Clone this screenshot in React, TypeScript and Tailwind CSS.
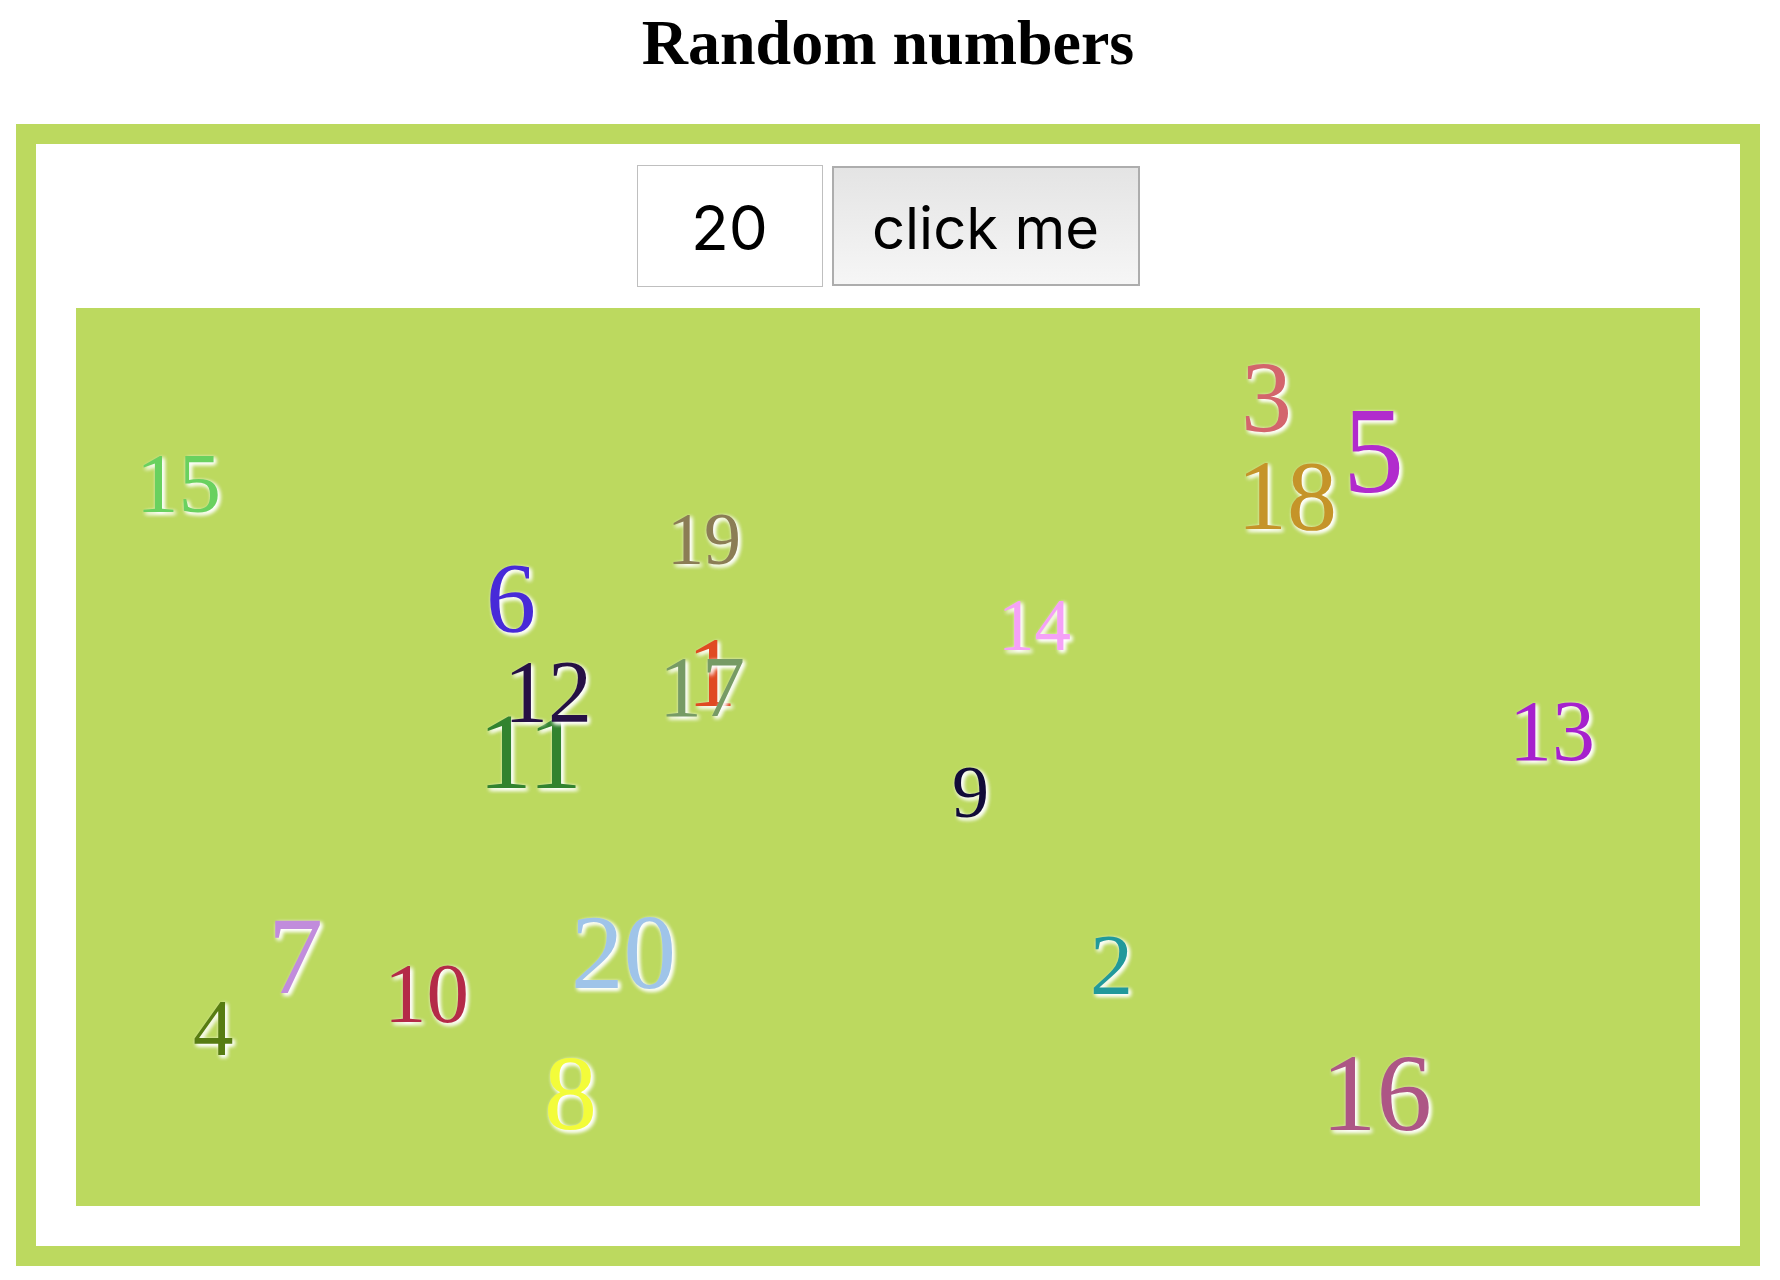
import { useState } from 'react';

type Mark = { value: number; x: number; baseline: number; size: number; color: string };

// x is the left edge and baseline the text baseline, both measured from the board's corner
const marks: Mark[] = [
  { value: 1, x: 611, baseline: 398, size: 99, color: '#e04a22' },
  { value: 2, x: 1014, baseline: 686, size: 86, color: '#21999b' },
  { value: 3, x: 1165, baseline: 124, size: 102, color: '#d3656c' },
  { value: 4, x: 117, baseline: 748, size: 81, color: '#577c12' },
  { value: 5, x: 1267, baseline: 184, size: 122, color: '#b12bcd' },
  { value: 6, x: 410, baseline: 324, size: 100, color: '#482ad8' },
  { value: 7, x: 192, baseline: 685, size: 110, color: '#c18cdc' },
  { value: 8, x: 468, baseline: 822, size: 106, color: '#f3fc3a' },
  { value: 9, x: 876, baseline: 509, size: 74, color: '#110a38' },
  { value: 10, x: 308, baseline: 714, size: 85, color: '#b42a48' },
  { value: 11, x: 402, baseline: 480, size: 108, color: '#32832f' },
  { value: 12, x: 428, baseline: 414, size: 88, color: '#261045' },
  { value: 13, x: 1433, baseline: 452, size: 86, color: '#a621cd' },
  { value: 14, x: 922, baseline: 342, size: 73, color: '#f5a1f7' },
  { value: 15, x: 60, baseline: 204, size: 85, color: '#69d15f' },
  { value: 16, x: 1245, baseline: 822, size: 111, color: '#ad5685' },
  { value: 17, x: 583, baseline: 408, size: 86, color: '#779b65' },
  { value: 18, x: 1161, baseline: 222, size: 100, color: '#c59429' },
  { value: 19, x: 591, baseline: 256, size: 74, color: '#8b7d55' },
  { value: 20, x: 495, baseline: 680, size: 105, color: '#9fc4e9' },
];

// Height of the baseline inside a line box whose line height equals the font size
const BASELINE_RATIO = 0.8375;

export default function App() {
  const [count, setCount] = useState('20');

  return (
    <div className="min-h-screen bg-white pt-2 pr-5 pb-3.5 pl-4 font-['Liberation_Serif',serif] text-black">
      <h1 className="mb-[46px] text-center text-[64px] leading-[70px] font-bold">Random numbers</h1>
      <main className="border-20 border-[#bcd95f] px-10 pb-10">
        <form
          className="flex items-center justify-center gap-[9px] py-[21px] font-[Inter,sans-serif] leading-[72px]"
          onSubmit={(e) => e.preventDefault()}
        >
          <input
            type="text"
            aria-label="How many numbers"
            value={count}
            onChange={(e) => setCount(e.target.value)}
            className="h-[122px] w-[186px] border border-[#bfbfbf] bg-white pt-0.5 text-center text-[62px]"
          />
          <button
            type="submit"
            className="h-[120px] w-[308px] border-2 border-[#adadad] bg-linear-to-b from-[#e4e4e4] to-[#f6f6f6] pt-1 text-[58px] whitespace-nowrap"
          >
            click me
          </button>
        </form>
        <section aria-label="Numbers" className="relative h-[898px] bg-[#bcd95f]">
          {marks.map((m) => (
            <span
              key={m.value}
              className="absolute leading-none [text-shadow:2px_2px_4px_#fff,2px_2px_4px_#fff]"
              style={{
                left: m.x,
                top: Math.round(m.baseline - m.size * BASELINE_RATIO),
                fontSize: m.size,
                color: m.color,
              }}
            >
              {m.value}
            </span>
          ))}
        </section>
      </main>
    </div>
  );
}
